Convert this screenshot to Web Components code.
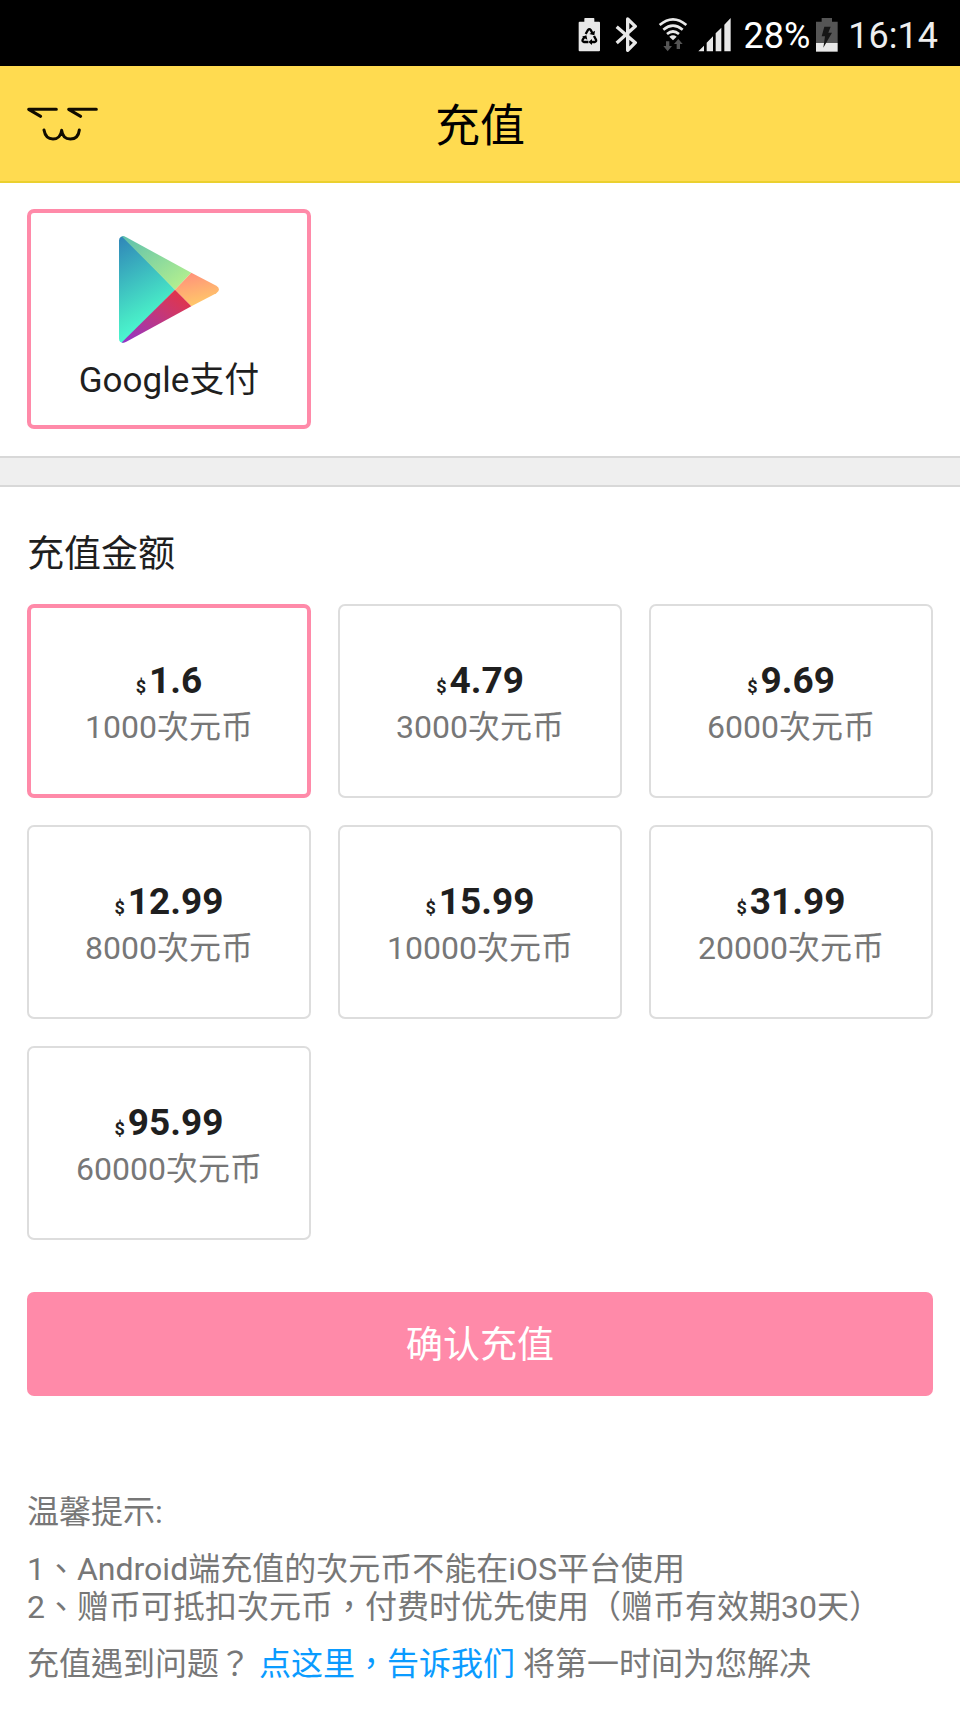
<!DOCTYPE html>
<html lang="zh-Hant">
<head>
<meta charset="utf-8">
<meta name="viewport" content="width=device-width, initial-scale=1">
<title>充值</title>
<style>
  body {
    margin: 0;
    background: #fff;
    color: #1f1f1f;
    font-family: Roboto, "Noto Sans CJK TC", sans-serif;
  }
</style>
</head>
<body>
<status-bar></status-bar>
<app-header>充值</app-header>
<main>
  <pay-methods></pay-methods>
  <section-divider></section-divider>
  <amount-picker>充值金额</amount-picker>
  <confirm-button>确认充值</confirm-button>
  <help-notes>
    <span slot="title">温馨提示:</span>
    <span slot="rule-1">1、Android端充值的次元币不能在iOS平台使用</span>
    <span slot="rule-2">2、赠币可抵扣次元币，付费时优先使用（赠币有效期30天）</span>
  </help-notes>
</main>

<script>
  const define = (name, html, setup) => {
    const template = document.createElement('template');
    template.innerHTML = html;
    customElements.define(name, class extends HTMLElement {
      constructor() {
        super();
        const root = this.attachShadow({ mode: 'open' });
        root.append(template.content.cloneNode(true));
        if (setup) setup(root);
      }
    });
  };

  define('status-bar', `
    <style>
      :host {
        display: flex;
        align-items: center;
        justify-content: flex-end;
        box-sizing: border-box;
        height: 66px;
        padding: 2px 22px 0 0;
        background: #000;
        color: #eee;
        font-size: 36px;
        line-height: 44px;
      }
      svg { display: block; flex: none; height: 35px; fill: #e8e8e8; }
      .percent, time { padding-top: 4px; }
      .saver { width: 23px; margin-right: 14px; }
      .bluetooth { width: 23px; margin-right: 20px; }
      .wifi { width: 30px; margin-right: 10px; }
      .signal { width: 34px; margin-right: 12px; }
      .percent { color: #fff; margin-right: 6px; }
      .battery { width: 22px; margin-right: 10px; }
    </style>
    <svg class="saver" viewBox="54 48 69 105" aria-hidden="true">
      <path d="M59 62h14v-9q0-2 2-2h26q2 0 2 2v9h14q3 0 3 3v83q0 3-3 3H59q-3 0-3-3V65q0-3 3-3z"/>
      <g fill="none" stroke="#000" stroke-width="7">
        <path d="M77 99l7-12q4-5 8 0l5 9"/>
        <path d="M102 105l6 11q2 6-4 7H94"/>
        <path d="M85 123H72q-6-1-4-7l6-9"/>
      </g>
      <g fill="#000">
        <path d="M88 99l15 4 2-14z"/>
        <path d="M96 114v18l-11-9z"/>
        <path d="M66 107l13-4 3 13z"/>
      </g>
    </svg>
    <svg class="bluetooth" viewBox="165 48 69 105" aria-hidden="true">
      <path d="M170 77l56 48-23 23V54l23 22-56 50" fill="none" stroke="#e8e8e8" stroke-width="10" stroke-linejoin="round"/>
    </svg>
    <svg class="wifi" viewBox="294 48 90 105" aria-hidden="true">
      <g fill="none" stroke="#e8e8e8" stroke-width="8">
        <path d="M299 72q40-34 80 0"/>
        <path d="M310 86q29-24 58 0"/>
        <path d="M321 99q18-15 36 0"/>
      </g>
      <path d="M328 107q11-8 22 0l-11 11z"/>
      <path d="M318 121h10v14h8l-13 16-13-16h8zM350 144h10v-15h8l-13-15-13 15h8z" fill="#555"/>
    </svg>
    <svg class="signal" viewBox="414 48 102 105" aria-hidden="true">
      <path d="M415 151l17-17v17zM440 151v-26l19-19v45zM467 151V97l17-17v71zM493 151V71l19-20v100z"/>
    </svg>
    <span class="percent">28%</span>
    <svg class="battery" viewBox="771 48 66 105" aria-hidden="true">
      <path d="M771 62h17V51h31v11h17v64h-65z" fill="#555"/>
      <path d="M771 126h65v26h-65z"/>
      <path d="M796 77h19l-7 18h11l-26 45 5-34h-10z" fill="#161616"/>
    </svg>
    <time>16:14</time>
  `);

  define('app-header', `
    <style>
      :host {
        display: grid;
        grid-template-columns: 1fr auto 1fr;
        align-items: center;
        box-sizing: border-box;
        height: 117px;
        padding: 0 27px;
        background: #ffdb50;
        border-bottom: 2px solid #ebd02f;
        color: #000;
      }
      button {
        justify-self: start;
        padding: 0;
        border: 0;
        background: none;
      }
      svg { display: block; width: 71px; height: 34px; }
      h1 {
        margin: 0;
        padding-top: 6px;
        font-size: 45px;
        font-weight: 400;
        line-height: 56px;
      }
    </style>
    <button type="button" aria-label="返回">
      <svg viewBox="81 141 213 102" fill="none" stroke="#110c00" stroke-linecap="round" stroke-linejoin="round" stroke-width="9" aria-hidden="true">
        <path d="M169 148H86l36 21M289 148h-83l36 21"/>
        <path d="M132 210c3 17 13 27 27 27s24-10 26-26c2 16 11 26 26 26s25-10 27-27"/>
      </svg>
    </button>
    <h1><slot></slot></h1>
  `);

  define('pay-methods', `
    <style>
      :host { display: block; padding: 26px 27px 27px; }
      .grid {
        display: grid;
        grid-template-columns: repeat(3, 1fr);
        gap: 27px;
      }
      label {
        position: relative;
        display: flex;
        flex-direction: column;
        align-items: center;
        padding: 25px 2px 24px;
        border: 2px solid #ddd;
        border-radius: 7px;
        font-size: 35px;
        line-height: 44px;
      }
      label:has(:checked) { padding: 23px 0 22px; border: 4px solid #ff8aa9; }
      input { position: absolute; inset: 0; margin: 0; opacity: 0; }
      svg { display: block; width: 100px; height: 107px; margin-bottom: 16px; }
    </style>
    <div class="grid">
      <label>
        <input type="radio" name="method" value="google" checked>
        <svg viewBox="358 138 300 320" aria-hidden="true">
          <defs>
            <linearGradient id="blue" x1="0" y1="0" x2="0.3" y2="1"><stop stop-color="#2f84b8"/><stop offset=".75" stop-color="#47e5c6"/><stop offset="1" stop-color="#4dffd5"/></linearGradient>
            <linearGradient id="green" x1="0" y1="0" x2="1" y2="1"><stop stop-color="#5cbfae"/><stop offset="1" stop-color="#bdf58b"/></linearGradient>
            <linearGradient id="orange" x1="0" y1="0" x2="0.3" y2="1"><stop stop-color="#ff8c7c"/><stop offset="1" stop-color="#ffc66a"/></linearGradient>
            <linearGradient id="red" x1="1" y1="0" x2="0" y2="1"><stop stop-color="#e9343c"/><stop offset=".35" stop-color="#cd376b"/><stop offset="1" stop-color="#9035ca"/></linearGradient>
          </defs>
          <path d="M364 140q3-2 7-2l155 161-155 159q-13 0-13-13V151q0-8 6-11z" fill="url(#blue)"/>
          <path d="M366 138q6-1 14 3l195 107-49 51z" fill="url(#green)"/>
          <path d="M575 248l75 39q16 11 0 22l-75 39-49-49z" fill="url(#orange)"/>
          <path d="M526 299l49 49-195 107q-8 4-14 2z" fill="url(#red)"/>
        </svg>
        <span>Google支付</span>
      </label>
    </div>
  `);

  define('section-divider', `
    <style>
      :host {
        display: block;
        box-sizing: border-box;
        height: 31px;
        background: #efefef;
        border: solid #d8d8d8;
        border-width: 2px 0;
      }
    </style>
  `);

  const amounts = [
    ['1.6', 1000], ['4.79', 3000], ['9.69', 6000],
    ['12.99', 8000], ['15.99', 10000], ['31.99', 20000],
    ['95.99', 60000],
  ];

  define('amount-picker', `
    <style>
      :host { display: block; padding: 46px 27px 0; }
      h2 {
        margin: 0 0 27px;
        font-size: 37px;
        font-weight: 400;
        line-height: 44px;
      }
      .grid {
        display: grid;
        grid-template-columns: repeat(3, 1fr);
        gap: 27px;
      }
      label {
        position: relative;
        display: flex;
        flex-direction: column;
        align-items: center;
        justify-content: center;
        box-sizing: border-box;
        min-height: 194px;
        border: 2px solid #ddd;
        border-radius: 7px;
      }
      label:has(:checked) { border: 4px solid #ff8aa9; }
      input { position: absolute; inset: 0; margin: 0; opacity: 0; }
      .price {
        display: flex;
        align-items: baseline;
        gap: 3px;
        font-size: 37px;
        font-weight: 700;
        line-height: 46px;
      }
      .currency { font-size: 18px; }
      .coins { color: #777; font-size: 32px; line-height: 34px; }
    </style>
    <h2 id="heading"><slot></slot></h2>
    <div class="grid" role="radiogroup" aria-labelledby="heading"></div>
  `, (root) => {
    root.querySelector('.grid').innerHTML = amounts.map(([price, coins], i) => `
      <label>
        <input type="radio" name="amount" value="${coins}"${i ? '' : ' checked'}>
        <span class="price"><span class="currency">$</span><span>${price}</span></span>
        <span class="coins">${coins}次元币</span>
      </label>`).join('');
  });

  define('confirm-button', `
    <style>
      :host { display: block; padding: 52px 27px 0; }
      button {
        display: block;
        width: 100%;
        min-height: 104px;
        padding: 4px 0 0;
        border: 0;
        border-radius: 7px;
        background: #ff8aa9;
        color: #fff;
        font: inherit;
        font-size: 37px;
        line-height: 44px;
      }
    </style>
    <button type="button"><slot></slot></button>
  `);

  define('help-notes', `
    <style>
      :host {
        display: block;
        padding: 97px 27px 27px;
        color: #777;
        font-size: 32px;
        line-height: 38px;
      }
      p { margin: 0 0 19px; }
      p:last-child { margin: 0; }
      a { color: #0a9bff; text-decoration: none; }
    </style>
    <p><slot name="title"></slot></p>
    <p><slot name="rule-1"></slot><br><slot name="rule-2"></slot></p>
    <p>充值遇到问题？ <a href="#feedback">点这里，告诉我们</a> 将第一时间为您解决</p>
  `);
</script>
</body>
</html>
